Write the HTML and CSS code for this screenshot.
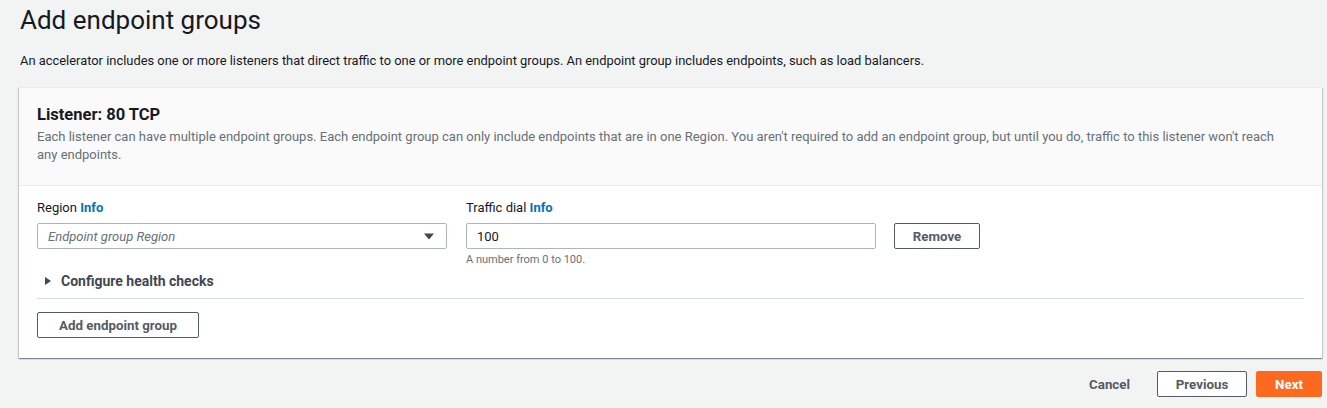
FILE: index.html
```html
<!DOCTYPE html>
<html>
<head>
<meta charset="utf-8">
<link rel="stylesheet" href="styles.css">
</head>
<body>
<div class="page">
  <h1 class="title">Add endpoint groups</h1>
  <p class="intro">An accelerator includes one or more listeners that direct traffic to one or more endpoint groups. An endpoint group includes endpoints, such as load balancers.</p>
  <div class="card">
    <div class="card-head">
      <h2 class="card-title">Listener: 80 TCP</h2>
      <p class="card-desc">Each listener can have multiple endpoint groups. Each endpoint group can only include endpoints that are in one Region. You aren't required to add an endpoint group, but until you do, traffic to this listener won't reach any endpoints.</p>
    </div>
    <div class="card-body">
      <div class="row">
        <div class="field">
          <label class="label">Region <a class="info">Info</a></label>
          <div class="select"><span class="placeholder">Endpoint group Region</span><svg class="caret" width="12" height="8" viewBox="0 0 12 8"><path d="M1 1.5h10L6 7.5z" fill="#414750"/></svg></div>
        </div>
        <div class="field">
          <label class="label">Traffic dial <a class="info">Info</a></label>
          <div class="input">100</div>
          <div class="hint">A number from 0 to 100.</div>
        </div>
        <button class="btn remove">Remove</button>
      </div>
      <div class="expander"><svg width="8" height="10" viewBox="0 0 8 10"><path d="M1 1l6 4-6 4z" fill="#414750"/></svg><span>Configure health checks</span></div>
      <div class="divider"></div>
      <button class="btn add">Add endpoint group</button>
    </div>
  </div>
  <div class="footer">
    <button class="link-btn">Cancel</button>
    <button class="btn">Previous</button>
    <button class="btn primary">Next</button>
  </div>
</div>
</body>
</html>
```
FILE: styles.css
```css
html, body { margin: 0; padding: 0; }
body {
  background: #f2f3f3;
  font-family: Roboto, "Liberation Sans", Arial, sans-serif;
  color: #16191f;
  width: 1327px;
  height: 408px;
  overflow: hidden;
}
.page { padding: 0 5px 0 19px; }
.title {
  margin: 0;
  padding-top: 5px;
  font-size: 26px;
  line-height: 30px;
  font-weight: 400;
  padding-left: 1px;
}
.intro {
  margin: 18px 0 0 1px;
  font-size: 12.9px;
  line-height: 16px;
}
.card {
  margin-top: 18px;
  background: #fff;
  border-top: 1px solid #eaeded;
  box-shadow: 0 1px 1px 0 rgba(0,28,36,.3), 1px 1px 1px 0 rgba(0,28,36,.15), -1px 1px 1px 0 rgba(0,28,36,.15);
}
.card-head {
  background: #fafafa;
  border-bottom: 1px solid #eaeded;
  padding: 17px 18px 21px 18px;
}
.card-title {
  margin: 0;
  font-size: 16.5px;
  line-height: 20px;
  font-weight: 700;
}
.card-desc {
  margin: 3px 0 0;
  font-size: 13px;
  line-height: 18px;
  color: #687078;
  padding-right: 10px;
}
.card-body { padding: 13px 18px 20px; }
.row { display: flex; align-items: flex-start; gap: 19px; }
.field { width: 410px; display: flex; flex-direction: column; }
.label { font-size: 13px; line-height: 18px; margin-bottom: 6px; }
.info { color: #0073bb; font-weight: 700; }
.select, .input {
  box-sizing: border-box;
  height: 26px;
  border: 1px solid #aab7b8;
  border-radius: 2px;
  background: #fff;
  display: flex;
  align-items: center;
  padding: 0 10px;
  font-size: 13px;
}
.select { justify-content: space-between; }
.placeholder { color: #687078; font-style: italic; }
.caret { margin-right: 1px; }
.hint { font-size: 11px; line-height: 14px; color: #687078; margin-top: 4px; }
.btn {
  box-sizing: border-box;
  height: 26px;
  border: 1px solid #545b64;
  border-radius: 2px;
  background: #fff;
  color: #545b64;
  font-family: inherit;
  font-size: 13.3px;
  font-weight: 700;
  padding: 0 20px;
  cursor: pointer;
}
.remove { margin-top: 24px; margin-left: -1px; width: 86px; padding: 0; }
.expander {
  display: flex;
  align-items: center;
  gap: 9px;
  margin-top: 5px;
  padding-left: 7px;
  font-size: 14px;
  font-weight: 700;
  line-height: 18px;
}
.expander span { color: #414750; }
.divider { height: 1px; background: #d5dbdb; margin-top: 8px; }
.add { margin-top: 13px; width: 162px; padding: 0; }
.footer {
  display: flex;
  justify-content: flex-end;
  align-items: center;
  gap: 9px;
  margin-top: 13px;
}
.link-btn {
  background: none;
  border: none;
  font-family: inherit;
  font-size: 13.3px;
  font-weight: 700;
  color: #545b64;
  padding: 0 18px 0 0;
  height: 26px;
}
.footer .btn { width: 90px; padding: 0; }
.footer .primary {
  width: 66px;
  background: #fd6a1f;
  border-color: #fd6a1f;
  color: #fff;
}
```
